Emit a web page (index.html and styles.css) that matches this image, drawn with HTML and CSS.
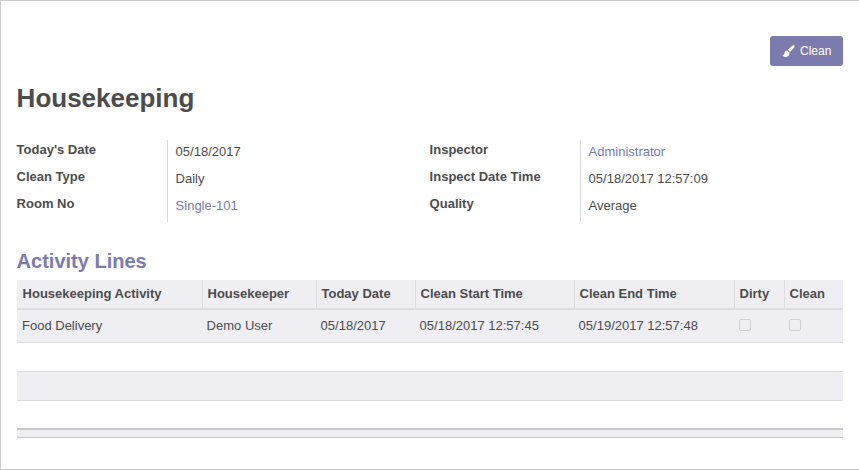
FILE: index.html
```html
<!DOCTYPE html>
<html lang="en">
<head>
<meta charset="utf-8">
<title>Housekeeping</title>
<link rel="stylesheet" href="styles.css">
</head>
<body>
<main class="sheet">
  <div class="actions">
    <button class="btn" type="button">
      <svg class="btn-icon" viewBox="0 0 14 14" width="13" height="13" aria-hidden="true"><path d="M13.2.6c-.5-.5-1.2-.5-1.8 0L6.300 5l2.500 2.600 4.500-5.200c.4-.5.4-1.300-.1-1.800z"/><path d="M5.500 5.800C3.600 6 2.900 7.300 2.600 8.700 2.400 9.900 1.800 10.700.5 11.200c1.200 1.500 3.400 2 5.200 1.300 1.700-.7 2.800-2.200 2.400-4.100z"/></svg>
      <span>Clean</span>
    </button>
  </div>
  <h1 class="title">Housekeeping</h1>
  <div class="form-groups">
    <div class="group">
      <div class="labels"><b>Today's Date</b><b>Clean Type</b><b>Room No</b></div>
      <div class="values"><span>05/18/2017</span><span>Daily</span><a href="#">Single-101</a></div>
    </div>
    <div class="group">
      <div class="labels"><b>Inspector</b><b>Inspect Date Time</b><b>Quality</b></div>
      <div class="values"><a href="#">Administrator</a><span>05/18/2017 12:57:09</span><span>Average</span></div>
    </div>
  </div>
  <h2 class="section">Activity Lines</h2>
  <table class="lines">
    <colgroup>
      <col class="c1"><col class="c2"><col class="c3"><col class="c4"><col class="c5"><col class="c6"><col class="c7">
    </colgroup>
    <thead>
      <tr><th>Housekeeping Activity</th><th>Housekeeper</th><th>Today Date</th><th>Clean Start Time</th><th>Clean End Time</th><th>Dirty</th><th>Clean</th></tr>
    </thead>
    <tbody>
      <tr class="filled"><td>Food Delivery</td><td>Demo User</td><td>05/18/2017</td><td>05/18/2017 12:57:45</td><td>05/19/2017 12:57:48</td><td><span class="check"></span></td><td><span class="check"></span></td></tr>
      <tr class="blank"><td colspan="7"></td></tr>
      <tr class="blank filled"><td colspan="7"></td></tr>
      <tr class="blank"><td colspan="7"></td></tr>
    </tbody>
    <tfoot>
      <tr><td colspan="7"></td></tr>
    </tfoot>
  </table>
</main>
</body>
</html>
```
FILE: styles.css
```css
* { box-sizing: border-box; }
html, body { margin: 0; padding: 0; }
body {
  font-family: "Liberation Sans", Arial, sans-serif;
  font-size: 13px;
  color: #4c4c4c;
  background: #fff;
}
a { color: #7c7bad; text-decoration: none; }
.sheet {
  height: 470px;
  border: 1px solid #cccccc;
  border-right: 0;
  padding: 35px 16px 0 16px;
  overflow: hidden;
}
.actions { display: flex; justify-content: flex-end; height: 30px; }
.btn {
  display: flex;
  align-items: center;
  gap: 5px;
  width: 73px;
  height: 30px;
  padding: 0 0 0 12px;
  border: 0;
  border-radius: 3px;
  background: #7c7bad;
  color: #fff;
  font: 12px "Liberation Sans", Arial, sans-serif;
}
.btn-icon { fill: #fff; flex: none; }
.title {
  margin: 17px 0 0 -0.4px;
  font-size: 26px;
  line-height: 30px;
  font-weight: 700;
  color: #4c4c4c;
}
.form-groups { display: flex; margin-top: 27px; margin-left: -0.4px; }
.group { display: flex; width: 413px; }
.labels { width: 150.4px; display: flex; flex-direction: column; padding-top: 1px; }
.labels b { height: 27px; line-height: 18px; }
.values {
  flex: 1;
  display: flex;
  flex-direction: column;
  border-left: 1px solid #d9d9d9;
  padding-left: 7.6px;
  padding-top: 3px;
  height: 82px;
}
.values > * { flex: none; height: 27px; line-height: 18px; }
.section {
  margin: 27px 0 0 -0.4px;
  font-size: 20px;
  line-height: 24px;
  font-weight: 700;
  color: #7c7bad;
}
.lines {
  width: 826px;
  margin-top: 7px;
  border-collapse: collapse;
  table-layout: fixed;
}
.c1 { width: 185px; }
.c2 { width: 114px; }
.c3 { width: 99px; }
.c4 { width: 159px; }
.c5 { width: 160px; }
.c6 { width: 50px; }
.c7 { width: 59px; }
th {
  height: 29px;
  padding: 0 5px 1px 5px;
  text-align: left;
  font-weight: 700;
  background: #eeeef3;
  border-left: 1px solid #dcdcdf;
  border-bottom: 2px solid #dcdcdf;
}
th:first-child { border-left: 0; padding-left: 5.6px; }
tbody td {
  height: 29px;
  padding: 0 4.6px;
  border-bottom: 1px solid #dcdcdf;
}
.filled td { background: #eeeef3; }
tbody tr:first-child td { height: 33px; padding-bottom: 1px; }
tbody tr:first-child td:first-child { padding-left: 5px; }
.check {
  display: block;
  width: 12px;
  height: 12px;
  margin-left: 0.4px;
  border: 1px solid #cfcfd3;
  border-radius: 2px;
  background: #eeeef3;
}
tbody tr:last-child td { border-bottom: 0; }
tfoot td {
  height: 8px;
  padding: 0;
  background: #eeeef3;
  border-top: 2px solid #c8c8cc;
  border-bottom: 1px solid #c8c8cc;
}
```
